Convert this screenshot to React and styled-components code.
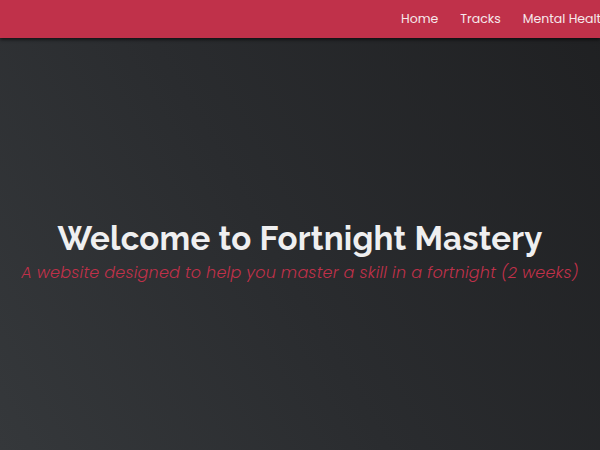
import React from "react";
import styled, { createGlobalStyle } from "styled-components";

const Global = createGlobalStyle`
  html, body { margin: 0; padding: 0; height: 100%; overflow: hidden; }
  body { font-family: "Open Sans", "Liberation Sans", sans-serif; background: #28292c; }
  #root { height: 100%; }
`;

const Page = styled.div`
  height: 100vh;
  display: flex;
  flex-direction: column;
  background: linear-gradient(60deg, #35383b 0%, #2a2c2f 45%, #1f2022 100%);
`;

const Header = styled.header`
  height: 38px;
  flex-shrink: 0;
  background: #c0314a;
  box-shadow: 0 2px 3px rgba(0, 0, 0, 0.55);
  display: flex;
  align-items: center;
  padding-left: 401px;
  white-space: nowrap;
  overflow: hidden;
  position: relative;
  z-index: 1;
`;

const NavLink = styled.a`
  color: #f6e9ec;
  font-family: "Poppins", "Lato", "Open Sans", sans-serif;
  font-size: 12.5px;
  text-decoration: none;
  margin-right: 22px;
  flex-shrink: 0;
`;

const Hero = styled.main`
  flex: 1;
  display: flex;
  flex-direction: column;
  align-items: center;
  justify-content: center;
  padding-top: 16px;
`;

const Title = styled.h1`
  margin: 0;
  color: #efeff0;
  font-family: "Raleway", "Lato", "Open Sans", sans-serif;
  font-weight: 700;
  font-size: 33px;
  letter-spacing: 0.2px;
`;

const Subtitle = styled.p`
  margin: 2px 0 0;
  color: #c0314a;
  font-family: "Poppins", "Lato", "Open Sans", sans-serif;
  font-style: italic;
  font-weight: 300;
  font-size: 16px;
  letter-spacing: 0.18px;
`;

export default function App() {
  return (
    <>
      <Global />
      <Page>
        <Header>
          <NavLink href="#">Home</NavLink>
          <NavLink href="#">Tracks</NavLink>
          <NavLink href="#">Mental Health</NavLink>
        </Header>
        <Hero>
          <Title>Welcome to Fortnight Mastery</Title>
          <Subtitle>A website designed to help you master a skill in a fortnight (2 weeks)</Subtitle>
        </Hero>
      </Page>
    </>
  );
}
